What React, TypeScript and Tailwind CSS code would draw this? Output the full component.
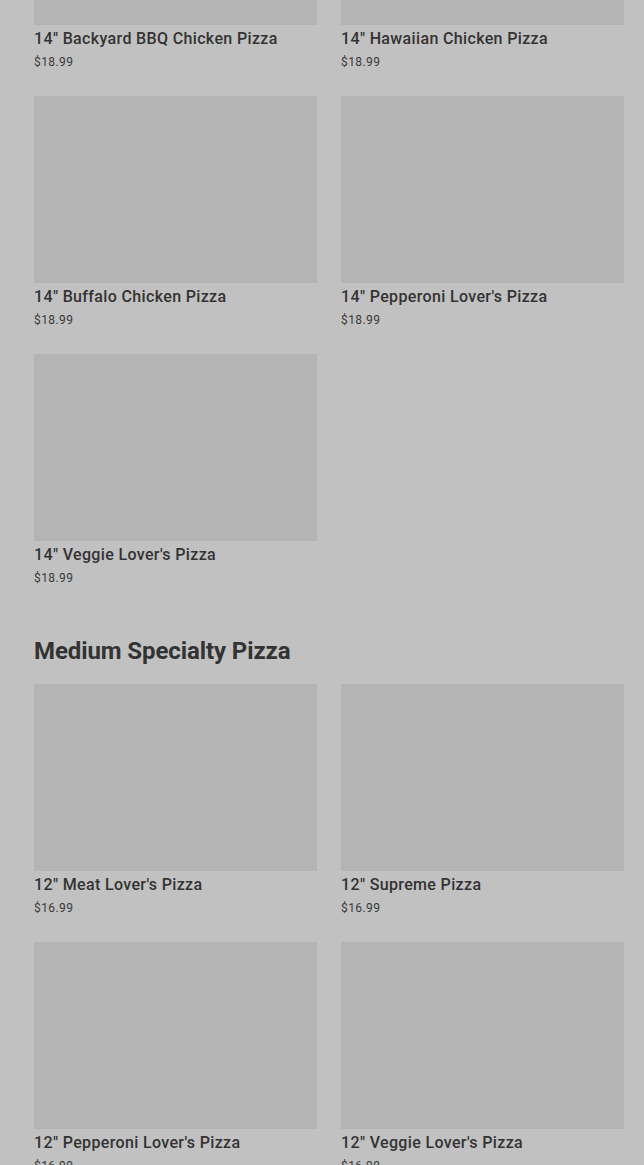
const pizzas14 = [
  { name: '14" Backyard BBQ Chicken Pizza', price: "$18.99" },
  { name: '14" Hawaiian Chicken Pizza', price: "$18.99" },
  { name: '14" Buffalo Chicken Pizza', price: "$18.99" },
  { name: '14" Pepperoni Lover\'s Pizza', price: "$18.99" },
  { name: '14" Veggie Lover\'s Pizza', price: "$18.99" },
];

const pizzas12 = [
  { name: '12" Meat Lover\'s Pizza', price: "$16.99" },
  { name: '12" Supreme Pizza', price: "$16.99" },
  { name: '12" Pepperoni Lover\'s Pizza', price: "$16.99" },
  { name: '12" Veggie Lover\'s Pizza', price: "$16.99" },
];

function ItemCard({ name, price }: { name: string; price: string }) {
  return (
    <div className="flex flex-col">
      <div className="h-[187px] bg-[#b4b4b4]" />
      <div className="mt-[2px] text-base leading-6 font-medium tracking-[0.35px] text-[#333333] truncate">{name}</div>
      <div className="mt-[1px] text-xs leading-5 tracking-[0.4px] text-[#3a3a3a]">{price}</div>
    </div>
  );
}

export default function App() {
  return (
    <div className="min-h-screen bg-[#c1c1c1] overflow-hidden" style={{ fontFamily: "Roboto, 'Liberation Sans', sans-serif" }}>
      <div className="pl-[34px] pr-[20px] mt-[-162px] pb-10">
        {/* 14 inch section, heading scrolled off the top */}
        <div className="grid grid-cols-2 gap-6">
          {pizzas14.map(p => <ItemCard key={p.name} {...p} />)}
        </div>

        <h2 className="mt-[47px] mb-[17px] text-2xl leading-8 font-bold text-[#333333] tracking-[-0.1px]">Medium Specialty Pizza</h2>
        <div className="grid grid-cols-2 gap-6">
          {pizzas12.map(p => <ItemCard key={p.name} {...p} />)}
        </div>
      </div>
    </div>
  );
}
